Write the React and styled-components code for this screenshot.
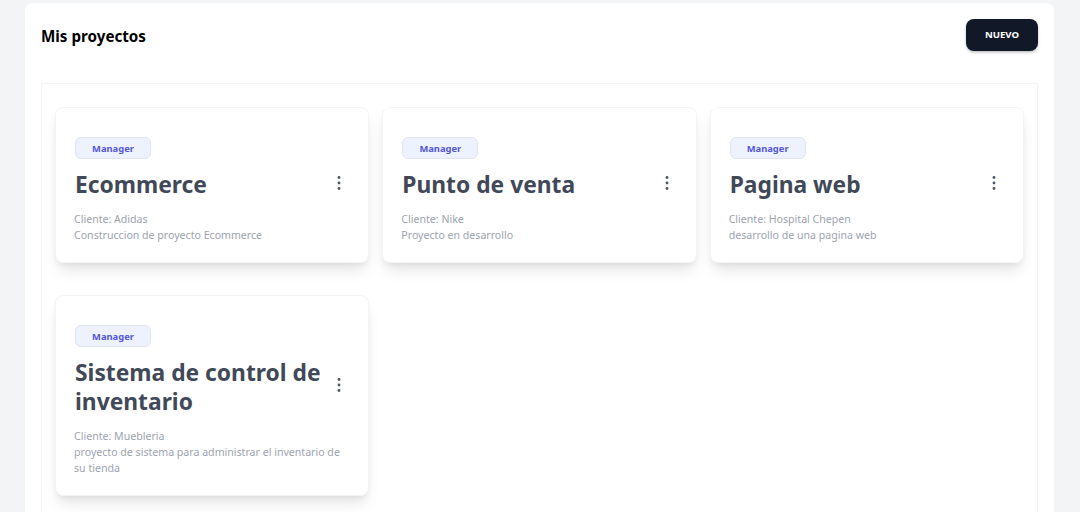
import React from "react";
import styled, { createGlobalStyle } from "styled-components";

const Global = createGlobalStyle`
  html, body { margin: 0; padding: 0; height: 512px; overflow: hidden; background: #f3f4f6; }
  * { box-sizing: border-box; }
  body { font-family: "Noto Sans", "Open Sans", sans-serif; }
`;
const Page = styled.div`
  padding: 3px 26px 0 25px;
`;
const Panel = styled.main`
  background: #fff;
  border-radius: 8px 8px 0 0;
  padding: 16px 16px 0;
  height: 509px;
  overflow: hidden;
`;
const Header = styled.header`
  display: flex;
  justify-content: space-between;
  align-items: center;
  height: 32px;
  margin-bottom: 32px;
`;
const Title = styled.h1`
  margin: 2px 0 0;
  font-size: 15.2px;
  line-height: 24px;
  font-weight: 700;
  color: #000;
`;
const NewButton = styled.button`
  width: 72px;
  height: 32px;
  border: 0;
  border-radius: 8px;
  background: #111827;
  color: #fff;
  font: 700 9.6px/16px "Noto Sans", sans-serif;
  box-shadow: 0 2px 4px -1px rgba(0, 0, 0, 0.2), 0 1px 2px rgba(0, 0, 0, 0.15);
`;
const Section = styled.section`
  border: 1px solid #f3f4f6;
  padding: 23px 13px 40px;
  display: grid;
  grid-template-columns: repeat(3, 1fr);
  column-gap: 13px;
  row-gap: 32px;
  align-items: start;
`;
const Card = styled.article`
  background: #fff;
  border: 1px solid #f3f4f6;
  border-radius: 8px;
  padding: 29px 19px 19px;
  box-shadow: 0 10px 15px -3px rgba(0, 0, 0, 0.1), 0 4px 6px -2px rgba(0, 0, 0, 0.06);
`;
const Badge = styled.span`
  display: flex;
  align-items: center;
  justify-content: center;
  width: 76px;
  height: 22px;
  border: 1px solid #e0e4f0;
  border-radius: 6px;
  background: #eef2ff;
  color: #5558d9;
  font-size: 9.4px;
  font-weight: 700;
`;
const TitleRow = styled.div`
  display: flex;
  align-items: center;
  justify-content: space-between;
  margin-top: 11px;
`;
const ProjectName = styled.h2`
  margin: 0;
  width: 250px;
  font-size: 22.8px;
  line-height: 29px;
  font-weight: 700;
  color: #414958;
`;
const Menu = styled.svg`
  width: 20px;
  height: 20px;
  margin-top: -4px;
  flex: none;
  color: #4b5563;
`;
const Meta = styled.p`
  margin: 12px 0 0 -1px;
  font-size: 10.6px;
  line-height: 16px;
  color: #9ca3af;
`;

const projects = [
  { name: "Ecommerce", client: "Adidas", desc: "Construccion de proyecto Ecommerce" },
  { name: "Punto de venta", client: "Nike", desc: "Proyecto en desarrollo" },
  { name: "Pagina web", client: "Hospital Chepen", desc: "desarrollo de una pagina web" },
  { name: "Sistema de control de inventario", client: "Muebleria", desc: "proyecto de sistema para administrar el inventario de su tienda" },
];

const Dots = () => (
  <Menu viewBox="0 0 20 20" fill="currentColor" aria-hidden="true">
    <circle cx="10" cy="4.5" r="1.4" />
    <circle cx="10" cy="10" r="1.4" />
    <circle cx="10" cy="15.5" r="1.4" />
  </Menu>
);

export default function App() {
  return (
    <Page>
      <Global />
      <Panel>
        <Header>
          <Title>Mis proyectos</Title>
          <NewButton>NUEVO</NewButton>
        </Header>
        <Section>
          {projects.map((p) => (
            <Card key={p.name}>
              <Badge>Manager</Badge>
              <TitleRow>
                <ProjectName>{p.name}</ProjectName>
                <Dots />
              </TitleRow>
              <Meta>
                Cliente: {p.client}
                <br />
                {p.desc}
              </Meta>
            </Card>
          ))}
        </Section>
      </Panel>
    </Page>
  );
}
